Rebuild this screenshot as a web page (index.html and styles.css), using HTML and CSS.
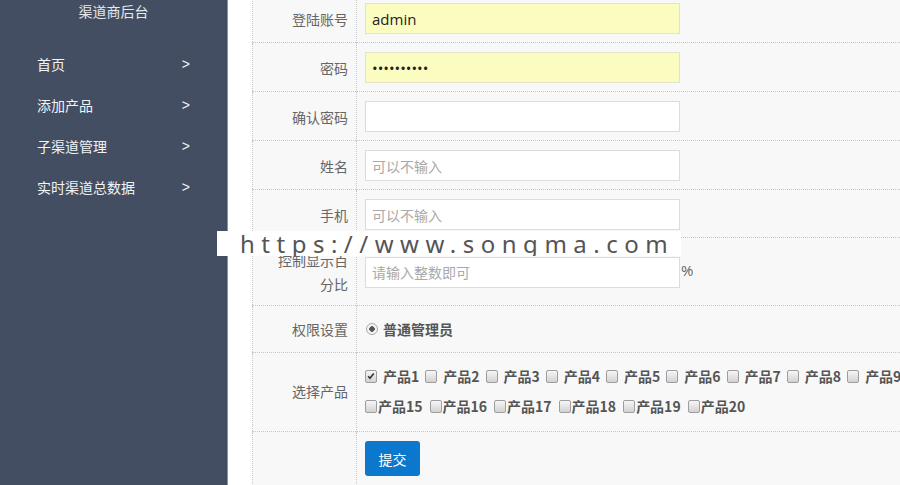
FILE: index.html
```html
<!DOCTYPE html>
<html lang="zh-CN">
<head>
<meta charset="utf-8">
<title>渠道商后台</title>
<link rel="stylesheet" href="styles.css">
</head>
<body>
<div class="page">
  <aside class="sidebar">
    <div class="brand">渠道商后台</div>
    <ul class="nav">
      <li class="nav-item"><span>首页</span><span class="arrow">&gt;</span></li>
      <li class="nav-item"><span>添加产品</span><span class="arrow">&gt;</span></li>
      <li class="nav-item"><span>子渠道管理</span><span class="arrow">&gt;</span></li>
      <li class="nav-item"><span>实时渠道总数据</span><span class="arrow">&gt;</span></li>
    </ul>
  </aside>
  <main class="main">
    <table class="form">
      <colgroup><col class="col-label"><col class="col-value"></colgroup>
      <tr class="row">
        <th class="label">登陆账号</th>
        <td class="value"><input class="field filled" type="text" value="admin"></td>
      </tr>
      <tr class="row">
        <th class="label">密码</th>
        <td class="value"><input class="field filled" type="password" value="1234567890"></td>
      </tr>
      <tr class="row">
        <th class="label">确认密码</th>
        <td class="value"><input class="field" type="password" value=""></td>
      </tr>
      <tr class="row">
        <th class="label">姓名</th>
        <td class="value"><input class="field" type="text" placeholder="可以不输入"></td>
      </tr>
      <tr class="row row-short">
        <th class="label">手机</th>
        <td class="value"><input class="field" type="text" placeholder="可以不输入"></td>
      </tr>
      <tr class="row row-tall">
        <th class="label label-wrap">控制显示百<br>分比</th>
        <td class="value"><div class="with-unit"><input class="field" type="text" placeholder="请输入整数即可"><span class="unit">%</span></div></td>
      </tr>
      <tr class="row row-radio">
        <th class="label">权限设置</th>
        <td class="value"><div class="radio-line"><span class="radio"></span><span class="opt-bold">普通管理员</span></div></td>
      </tr>
      <tr class="row row-products">
        <th class="label">选择产品</th>
        <td class="value">
          <div class="prod-line prod-line-a">
            <span class="cb checked"><svg viewBox="0 0 12 12" width="12" height="12"><path d="M2.6 6.2 L4.8 8.8 L9.3 3" fill="none" stroke="#333" stroke-width="1.9"/></svg></span><span class="prod">产品1</span>
            <span class="cb"></span><span class="prod">产品2</span>
            <span class="cb"></span><span class="prod">产品3</span>
            <span class="cb"></span><span class="prod">产品4</span>
            <span class="cb"></span><span class="prod">产品5</span>
            <span class="cb"></span><span class="prod">产品6</span>
            <span class="cb"></span><span class="prod">产品7</span>
            <span class="cb"></span><span class="prod">产品8</span>
            <span class="cb"></span><span class="prod">产品9</span>
            <span class="cb"></span><span class="prod">产品10</span>
            <span class="cb"></span><span class="prod">产品11</span>
            <span class="cb"></span><span class="prod">产品12</span>
            <span class="cb"></span><span class="prod">产品13</span>
            <span class="cb"></span><span class="prod">产品14</span>
          </div>
          <div class="prod-line prod-line-b">
            <span class="cb"></span><span class="prod">产品15</span>
            <span class="cb"></span><span class="prod">产品16</span>
            <span class="cb"></span><span class="prod">产品17</span>
            <span class="cb"></span><span class="prod">产品18</span>
            <span class="cb"></span><span class="prod">产品19</span>
            <span class="cb"></span><span class="prod">产品20</span>
          </div>
        </td>
      </tr>
      <tr class="row row-submit">
        <th class="label"></th>
        <td class="value"><button class="btn" type="button">提交</button></td>
      </tr>
    </table>
  </main>
  <div class="watermark">https://www.songma.com</div>
</div>
</body>
</html>
```
FILE: styles.css
```css
* { box-sizing: border-box; }
html, body { margin: 0; padding: 0; }
body {
  width: 900px;
  height: 485px;
  overflow: hidden;
  background: #fff;
  font-family: "Noto Sans CJK SC", "Noto Sans", sans-serif;
  font-size: 14px;
  color: #666;
}
.page {
  position: relative;
  display: flex;
  width: 900px;
  height: 485px;
  overflow: hidden;
}
.sidebar {
  flex: 0 0 228px;
  width: 228px;
  height: 485px;
  background: #434e62;
  border-right: 1px solid #8a919c;
  color: #eef0f3;
}
.brand {
  text-align: center;
  line-height: 22px;
  font-size: 14px;
  color: #e6e8ec;
}
.nav {
  list-style: none;
  margin: 21px 0 0;
  padding: 0;
}
.nav-item {
  display: flex;
  justify-content: space-between;
  align-items: center;
  height: 41px;
  padding: 0 37px;
  font-size: 14px;
  color: #f2f3f5;
}
.arrow { font-family: "Liberation Sans", sans-serif; font-size: 14px; }
.main {
  flex: 1 0 auto;
  padding-left: 24px;
}
.form {
  width: 1100px;
  margin-top: -6px;
  border-collapse: collapse;
  table-layout: fixed;
  background: #f8f8f8;
  border-left: 1px dotted #c8c8c8;
}
.col-label { width: 104px; }
.row { border-bottom: 1px dotted #c8c8c8; }
.label {
  text-align: right;
  font-weight: normal;
  padding: 9px 8px 8px 4px;
  border-right: 1px dotted #c8c8c8;
  color: #666;
  font-size: 14px;
  vertical-align: middle;
}
.value {
  padding: 9px 8px 8px 8px;
  vertical-align: middle;
}
.row-short .label, .row-short .value { padding-bottom: 7px; }
.field {
  display: block;
  width: 315px;
  height: 31px;
  border: 1px solid #dcdcdc;
  background: #fff;
  padding: 0 6px;
  font-family: "Open Sans", "Noto Sans", sans-serif;
  font-size: 15px;
  color: #222;
  outline: none;
}
.field::placeholder {
  font-family: "Noto Sans CJK SC", sans-serif;
  font-size: 14px;
  color: #a9a9a9;
}
.filled { background: #fbfdc0; border-color: #e2e3c8; }
.row-tall .label { padding-top: 10px; padding-bottom: 9px; line-height: 24px; }
.row-tall .value { padding-top: 9px; padding-bottom: 8px; }
.with-unit { display: flex; align-items: center; }
.unit { margin: 0 0 4px 1px; font-size: 15px; color: #666; font-family: "Open Sans", sans-serif; }
.row-radio .label, .row-radio .value { padding-top: 8px; padding-bottom: 8px; }
.radio-line { display: flex; align-items: center; height: 30px; }
.radio {
  display: inline-block;
  width: 12px;
  height: 12px;
  margin: 0 5px 0 1px;
  border: 1px solid #aaa;
  border-radius: 50%;
  background: radial-gradient(circle, #555 0 2.5px, #f4f4f4 3px);
}
.opt-bold { font-weight: bold; color: #555; font-size: 14px; }
.row-products .value { padding-top: 8px; padding-bottom: 10px; }
.row-products .label { padding-top: 8px; padding-bottom: 10px; }
.prod-line {
  display: flex;
  align-items: center;
  height: 30px;
  white-space: nowrap;
}
.cb {
  display: inline-flex;
  align-items: center;
  justify-content: center;
  flex: 0 0 12px;
  width: 12px;
  height: 13px;
  border: 1px solid #9e9e9e;
  border-radius: 2px;
  background: linear-gradient(#f6f6f6, #d2d2d2);
}
.cb svg { display: block; width: 10px; height: 10px; }
.prod { font-weight: bold; color: #555; font-size: 14px; }
.prod-line-a .cb { margin-right: 6px; }
.prod-line-a .prod { margin-right: 6px; }
.prod-line-b .cb { margin-right: 1px; }
.prod-line-b .prod { margin-right: 7px; }
.row-submit { border-bottom: none; }
.row-submit .value { padding-top: 9px; padding-bottom: 12px; }
.btn {
  display: block;
  width: 55px;
  height: 35px;
  border: none;
  border-radius: 3px;
  background: #0b77cd;
  color: #fff;
  font-family: "Noto Sans CJK SC", sans-serif;
  font-size: 14px;
}
.watermark {
  position: absolute;
  left: 217px;
  top: 231px;
  width: 464px;
  height: 25px;
  background: #fff;
  padding-left: 23px;
  font-family: "Noto Sans", "DejaVu Sans", sans-serif;
  font-size: 24px;
  line-height: 25px;
  letter-spacing: 6.5px;
  color: #555;
  white-space: nowrap;
  overflow: hidden;
}
```
